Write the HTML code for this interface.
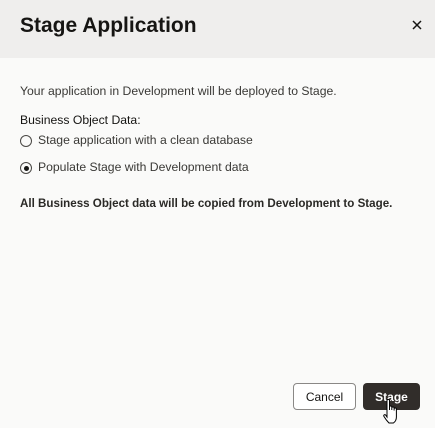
<!DOCTYPE html>
<html><head><style>
body{margin:0;width:435px;height:428px;background:#fafaf9;font-family:"Liberation Sans",sans-serif;color:#161513;position:relative;overflow:hidden}
.hdr{position:absolute;left:0;top:0;width:435px;height:58px;background:#efeeed}
.t{position:absolute;left:20px;top:14px;font-size:21px;font-weight:bold}
.x{position:absolute;left:411px;top:19px}
.p{position:absolute;left:20px;font-size:12.2px;white-space:nowrap}
.r{position:absolute;left:20px;width:10px;height:10px;border:1px solid #4a4845;border-radius:50%}
.b{position:absolute;top:383px;height:27px;border-radius:4px;font-size:12px;display:flex;align-items:center;justify-content:center;box-sizing:border-box}
</style></head><body>
<div class="hdr"></div>
<div class="t">Stage Application</div>
<svg class="x" width="12" height="12" viewBox="0 0 12 12"><path d="M2 2L10 10M10 2L2 10" stroke="#161513" stroke-width="1.5"/></svg>
<div class="p" style="top:84px;color:#3a3936">Your application in Development will be deployed to Stage.</div>
<div class="p" style="top:113px">Business Object Data:</div>
<div class="r" style="top:135px"></div>
<div class="p" style="left:38px;top:133px;color:#3a3936">Stage application with a clean database</div>
<div class="r" style="top:162px"><div style="position:absolute;left:2.5px;top:2.5px;width:5px;height:5px;border-radius:50%;background:#161513"></div></div>
<div class="p" style="left:38px;top:160px;color:#3a3936">Populate Stage with Development data</div>
<div class="p" style="top:197px;font-weight:bold;font-size:11.6px;color:#2a2926">All Business Object data will be copied from Development to Stage.</div>
<div class="b" style="left:293px;width:63px;border:1px solid #8a8886;background:#fff">Cancel</div>
<div class="b" style="left:363px;width:57px;background:#312d2a;color:#fff;font-weight:bold">Stage</div>
<svg style="position:absolute;left:382px;top:398px" width="20" height="30" viewBox="0 0 20 30"><path d="M5 2.5c0-1.5 2.5-1.5 2.5 0V12l0-3c0-1.4 2.3-1.4 2.3 0v3l0-2c0-1.4 2.3-1.4 2.3 0v2.5l0-1.5c0-1.4 2.3-1.4 2.3 0V19c0 3-1.5 5-3 6H7c-1.5-1.5-3.5-4-5-6.5-.8-1.3.6-2.5 1.7-1.4L5 19z" fill="#fff" stroke="#000" stroke-width="1"/></svg>
</body></html>
